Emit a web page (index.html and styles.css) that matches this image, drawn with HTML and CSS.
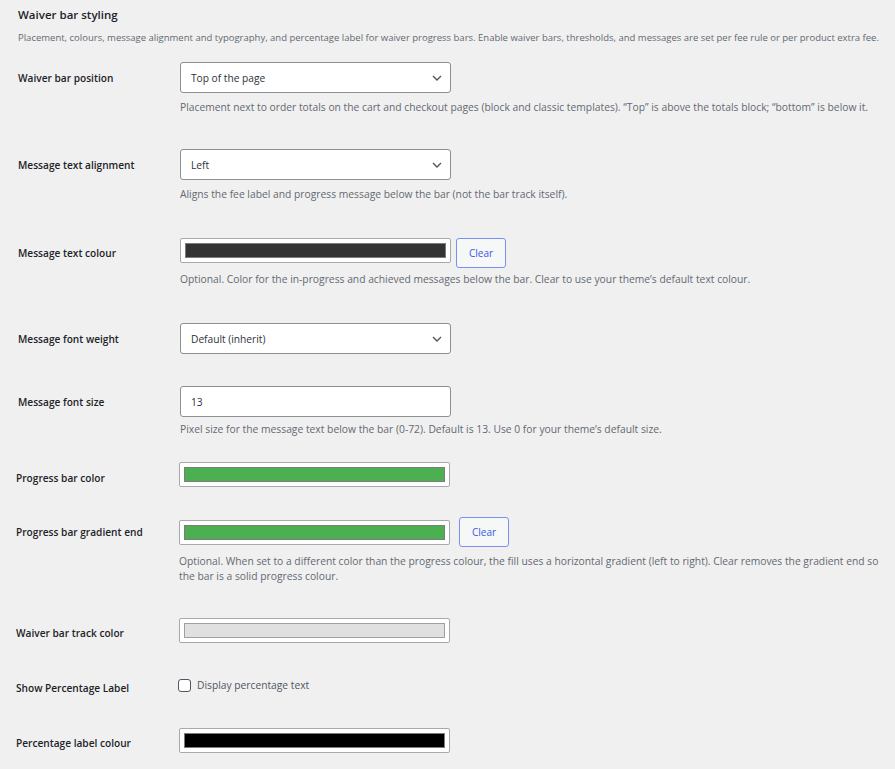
FILE: index.html
```html
<!DOCTYPE html>
<html>
<head>
<meta charset="utf-8">
<link rel="stylesheet" href="styles.css">
</head>
<body>
<div class="page">
  <section class="sec sec-a">
    <h2 class="title">Waiver bar styling</h2>
    <p class="intro">Placement, colours, message alignment and typography, and percentage label for waiver progress bars. Enable waiver bars, thresholds, and messages are set per fee rule or per product extra fee.</p>

    <div class="row r1">
      <div class="label">Waiver bar position</div>
      <div class="field">
        <div class="select"><span>Top of the page</span><svg class="chev" viewBox="0 0 10 6" width="10" height="6"><path d="M1 1l4 4 4-4" fill="none" stroke="#50575e" stroke-width="1.4"/></svg></div>
      </div>
      <p class="help">Placement next to order totals on the cart and checkout pages (block and classic templates). “Top” is above the totals block; “bottom” is below it.</p>
    </div>

    <div class="row r2">
      <div class="label">Message text alignment</div>
      <div class="field">
        <div class="select"><span>Left</span><svg class="chev" viewBox="0 0 10 6" width="10" height="6"><path d="M1 1l4 4 4-4" fill="none" stroke="#50575e" stroke-width="1.4"/></svg></div>
      </div>
      <p class="help">Aligns the fee label and progress message below the bar (not the bar track itself).</p>
    </div>

    <div class="row r3">
      <div class="label">Message text colour</div>
      <div class="field field-top">
        <div class="color"><span class="swatch sw-dark"></span></div>
        <button class="clear">Clear</button>
      </div>
      <p class="help help-tight">Optional. Color for the in-progress and achieved messages below the bar. Clear to use your theme’s default text colour.</p>
    </div>

    <div class="row r4">
      <div class="label">Message font weight</div>
      <div class="field">
        <div class="select"><span>Default (inherit)</span><svg class="chev" viewBox="0 0 10 6" width="10" height="6"><path d="M1 1l4 4 4-4" fill="none" stroke="#50575e" stroke-width="1.4"/></svg></div>
      </div>
    </div>

    <div class="row r5">
      <div class="label">Message font size</div>
      <div class="field">
        <div class="text-input">13</div>
      </div>
      <p class="help help-close">Pixel size for the message text below the bar (0-72). Default is 13. Use 0 for your theme’s default size.</p>
    </div>
  </section>

  <section class="sec sec-b">
    <div class="row r6">
      <div class="label">Progress bar color</div>
      <div class="field">
        <div class="color"><span class="swatch sw-green"></span></div>
      </div>
    </div>

    <div class="row r7">
      <div class="label">Progress bar gradient end</div>
      <div class="field">
        <div class="color"><span class="swatch sw-green"></span></div>
        <button class="clear">Clear</button>
      </div>
      <p class="help help-wrap">Optional. When set to a different color than the progress colour, the fill uses a horizontal gradient (left to right). Clear removes the gradient end so the bar is a solid progress colour.</p>
    </div>

    <div class="row r8">
      <div class="label">Waiver bar track color</div>
      <div class="field">
        <div class="color"><span class="swatch sw-track"></span></div>
      </div>
    </div>

    <div class="row row-check r9">
      <div class="label">Show Percentage Label</div>
      <div class="field">
        <label class="check"><span class="box"></span>Display percentage text</label>
      </div>
    </div>

    <div class="row r10">
      <div class="label">Percentage label colour</div>
      <div class="field">
        <div class="color"><span class="swatch sw-black"></span></div>
      </div>
    </div>
  </section>
</div>
</body>
</html>
```

FILE: styles.css
```css
* { box-sizing: border-box; }
html, body { margin: 0; padding: 0; }
body {
  background: #f0f0f1;
  font-family: "Open Sans", "Noto Sans", sans-serif;
  color: #1d2327;
  width: 895px;
  height: 769px;
  overflow: hidden;
}
.sec-a { padding-left: 18px; }
.sec-b { padding-left: 16px; }
.title {
  margin: 0;
  padding-top: 6px;
  font-size: 11.5px;
  line-height: 18px;
  font-weight: 600;
  color: #1d2327;
}
.intro {
  margin: 6px 0 0;
  font-size: 9.5px;
  line-height: 16px;
  color: #646970;
  white-space: nowrap;
}
.row {
  display: grid;
  grid-template-columns: 162px auto;
  align-items: center;
}
.sec-b .row {
  grid-template-columns: 163px auto;
  align-items: start;
}
.label {
  font-size: 10.15px;
  font-weight: 600;
  line-height: 16px;
  color: #1d2327;
  grid-column: 1;
  grid-row: 1;
}
.sec-b .label { padding-top: 7px; }
.sec-b .r6 .label { padding-top: 8px; }
.field {
  grid-column: 2;
  grid-row: 1;
  display: flex;
  align-items: center;
  gap: 5px;
}
.field-top { align-items: flex-start; }
.help {
  grid-column: 2;
  grid-row: 2;
  margin: 7px 0 0;
  font-size: 10.3px;
  line-height: 15px;
  color: #646970;
  white-space: nowrap;
}
.help-tight { margin-top: 4px; }
.help-close { margin-top: 5px; }
.help-wrap { white-space: normal; width: 700px; margin-top: 7px; }

.r1 { margin-top: 16px; }
.r2 { margin-top: 34px; }
.r3 { margin-top: 36px; }
.r4 { margin-top: 36px; }
.r5 { margin-top: 32px; }
.r6 { margin-top: 25px; }
.r7 { margin-top: 30px; }
.r8 { margin-top: 34px; }
.r9 { margin-top: 36px; }
.r10 { margin-top: 32px; }

.sec-b .row-check .label { padding-top: 1px; }

.select, .text-input {
  width: 271px;
  height: 31px;
  background: #fff;
  border: 1px solid #8c8f94;
  border-radius: 3px;
  display: flex;
  align-items: center;
  justify-content: space-between;
  padding: 0 8px 0 10px;
  font-size: 10.2px;
  color: #2c3338;
}
.chev { display: block; }

.color {
  width: 271px;
  height: 25px;
  background: #fff;
  border: 1px solid #a7aaad;
  border-radius: 2px;
  padding: 4px 4px;
  display: flex;
}
.swatch {
  flex: 1;
  border: 1px solid #7c7c7c;
  display: block;
}
.sw-dark { background: #333333; }
.sw-green { background: #4caf50; }
.sw-track { background: #e0e0e0; border-color: #a0a0a0; }
.sw-black { background: #000; }

.clear {
  width: 50px;
  height: 30px;
  background: #f6f7f7;
  border: 1px solid #7b8ff0;
  border-radius: 3px;
  color: #3858e9;
  font-family: inherit;
  font-size: 10px;
  padding: 0;
  cursor: pointer;
}
.r7 .clear { margin-left: 4px; }

.check {
  display: flex;
  align-items: center;
  gap: 6px;
  margin-left: -1px;
  font-size: 10.25px;
  line-height: 13px;
  color: #50575e;
}
.box {
  width: 13px;
  height: 13px;
  border: 1px solid #50575e;
  border-radius: 3px;
  background: #fff;
  display: block;
}
```
